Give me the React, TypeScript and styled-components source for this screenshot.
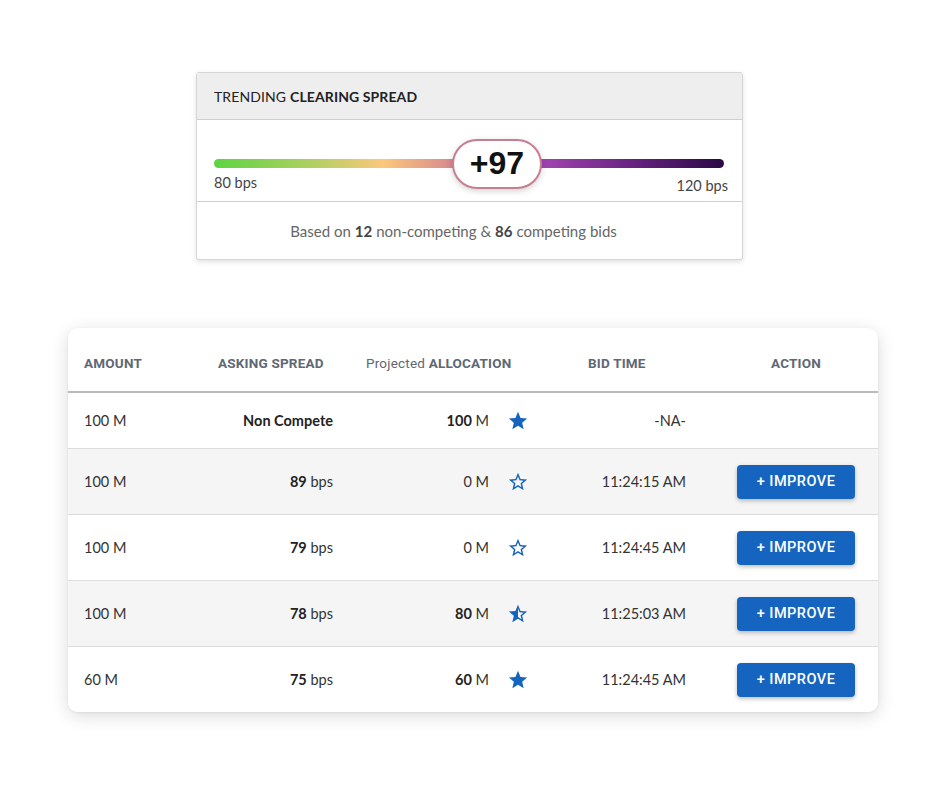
import React from 'react';
import styled, {createGlobalStyle} from 'styled-components';

const GlobalStyle = createGlobalStyle`
  body {
    margin: 0;
    background: #ffffff;
    font-family: Lato, "Open Sans", sans-serif;
    color: #333;
  }
`

type Star = 'full' | 'half' | 'empty'

type BidType = {
    amount: string
    spread?: string
    allocation: string
    allocBold: boolean
    star: Star
    time: string
    improve: boolean
}

const bids: BidType[] = [
    {amount: '100 M', allocation: '100', allocBold: true, star: 'full', time: '-NA-', improve: false},
    {amount: '100 M', spread: '89', allocation: '0', allocBold: false, star: 'empty', time: '11:24:15 AM', improve: true},
    {amount: '100 M', spread: '79', allocation: '0', allocBold: false, star: 'empty', time: '11:24:45 AM', improve: true},
    {amount: '100 M', spread: '78', allocation: '80', allocBold: true, star: 'half', time: '11:25:03 AM', improve: true},
    {amount: '60 M', spread: '75', allocation: '60', allocBold: true, star: 'full', time: '11:24:45 AM', improve: true},
]

const starPaths: Record<Star, string> = {
    full: 'M12 17.27L18.18 21l-1.64-7.03L22 9.24l-7.19-.61L12 2 9.19 8.63 2 9.24l5.46 4.73L5.82 21z',
    empty: 'M22 9.24l-7.19-.62L12 2 9.19 8.63 2 9.24l5.46 4.73L5.82 21 12 17.27 18.18 21l-1.63-7.03L22 9.24zM12 15.4l-3.76 2.27 1-4.28-3.32-2.88 4.38-.38L12 6.1l1.71 4.04 4.38.38-3.32 2.88 1 4.28L12 15.4z',
    half: 'M22 9.24l-7.19-.62L12 2 9.19 8.63 2 9.24l5.46 4.73L5.82 21 12 17.27 18.18 21l-1.63-7.03L22 9.24zM12 15.4V6.1l1.71 4.04 4.38.38-3.32 2.88 1 4.28L12 15.4z',
}

const StarIcon = ({kind}: { kind: Star }) => (
    <svg width="22" height="22" viewBox="0 0 24 24">
        <path d={starPaths[kind]} fill="#1565c0"/>
    </svg>
)

export default function App() {
    return (
        <Page>
            <GlobalStyle/>
            <TrendCard>
                <TrendHeader>TRENDING <b>CLEARING SPREAD</b></TrendHeader>
                <SliderArea>
                    <BarWrap>
                        <Bar/>
                        <Pill>+97</Pill>
                    </BarWrap>
                    <Labels>
                        <span>80 bps</span>
                        <LowLabel>120 bps</LowLabel>
                    </Labels>
                </SliderArea>
                <TrendFooter>
                    Based on <b>12</b> non-competing &amp; <b>86</b> competing bids
                </TrendFooter>
            </TrendCard>

            <TableCard>
                <HeadRow>
                    <HeadCell $pl={16}>AMOUNT</HeadCell>
                    <HeadCell $pl={18}>ASKING SPREAD</HeadCell>
                    <HeadCell $pl={21}><Light>Projected</Light> ALLOCATION</HeadCell>
                    <HeadCell $pl={43}>BID TIME</HeadCell>
                    <HeadCell $pl={14} $center>ACTION</HeadCell>
                </HeadRow>
                {bids.map((b, i) => (
                    <BodyRow key={i} $shaded={i % 2 === 1} $first={i === 0}>
                        <Cell $pl={16}>{b.amount}</Cell>
                        <Cell $right $pr={12}>
                            {b.spread ? <><b>{b.spread}</b>&nbsp;bps</> : <b>Non Compete</b>}
                        </Cell>
                        <Cell $right $pr={16}>
                            <span>{b.allocBold ? <b>{b.allocation}</b> : b.allocation} M</span>
                            <StarBox><StarIcon kind={b.star}/></StarBox>
                        </Cell>
                        <Cell $right $pr={14}>{b.time}</Cell>
                        <Cell $center $pl={14}>
                            {b.improve && <ImproveButton>+ IMPROVE</ImproveButton>}
                        </Cell>
                    </BodyRow>
                ))}
            </TableCard>
        </Page>
    );
}

const Page = styled.div`
  width: 945px;
  height: 785px;
  display: flex;
  flex-direction: column;
  align-items: flex-start;
  padding-top: 72px;
  box-sizing: border-box;
`

const TrendCard = styled.div`
  margin-left: 196px;
  width: 545px;
  border: 1px solid #d6d6d6;
  border-radius: 3px;
  background: #fff;
  box-shadow: 0 2px 5px rgba(0, 0, 0, 0.12);
  overflow: hidden;
`

const TrendHeader = styled.div`
  height: 46px;
  background: #eeeeee;
  border-bottom: 1px solid #cfcfcf;
  display: flex;
  align-items: center;
  padding-left: 17px;
  font-size: 14px;
  color: #222;
  letter-spacing: 0.1px;

  b {
    font-weight: 700;
    margin-left: 4px;
  }
`

const SliderArea = styled.div`
  padding: 39px 16px 7px 17px;
  border-bottom: 1px solid #cfcfcf;
`

const BarWrap = styled.div`
  position: relative;
  width: 510px;
`

const Bar = styled.div`
  height: 9px;
  border-radius: 5px;
  background: linear-gradient(90deg, #5dd443 0%, #a9d05f 18%, #fbc87b 33%, #d8888f 47%, #c06aa0 55%, #a245b0 64%, #6e2687 80%, #2a0845 100%);
`

const Pill = styled.div`
  position: absolute;
  left: 238px;
  top: 50%;
  transform: translateY(-50%);
  width: 86px;
  height: 46px;
  border: 2px solid #c67f8f;
  border-radius: 25px;
  background: #fff;
  box-shadow: 0 2px 6px rgba(0, 0, 0, 0.18);
  display: flex;
  align-items: center;
  justify-content: center;
  font-family: "Liberation Sans", Arial, sans-serif;
  font-weight: 700;
  font-size: 32px;
  color: #111;
`

const Labels = styled.div`
  display: flex;
  justify-content: space-between;
  align-items: flex-start;
  margin-top: 6px;
  font-size: 14.5px;
  color: #444;
  margin-right: -2px;
`

const LowLabel = styled.span`
  margin-top: 3px;
`

const TrendFooter = styled.div`
  height: 57px;
  display: flex;
  align-items: center;
  justify-content: center;
  padding-right: 32px;
  font-size: 15px;
  color: #666;

  b {
    color: #444;
    font-weight: 700;
    margin: 0 4px;
  }
`

const TableCard = styled.div`
  margin-top: 68px;
  margin-left: 68px;
  width: 810px;
  background: #fff;
  border-radius: 10px;
  box-shadow: 0 4px 18px rgba(0, 0, 0, 0.14), 0 1px 3px rgba(0, 0, 0, 0.06);
  overflow: hidden;
`

const columns = '132px 145px 200px 155px 178px'

const HeadRow = styled.div`
  display: grid;
  grid-template-columns: ${columns};
  height: 63px;
  border-bottom: 2px solid #b9b9b9;
  align-items: center;
`

const HeadCell = styled.div<{ $pl?: number; $center?: boolean }>`
  padding-left: ${p => p.$pl ?? 0}px;
  text-align: ${p => p.$center ? 'center' : 'left'};
  font-family: Roboto, sans-serif;
  font-weight: 700;
  font-size: 13.5px;
  color: #5e6874;
  letter-spacing: 0.2px;
  padding-top: 7px;
`

const Light = styled.span`
  font-weight: 400;
`

const BodyRow = styled.div<{ $shaded: boolean; $first: boolean }>`
  display: grid;
  grid-template-columns: ${columns};
  height: ${p => p.$first ? 55 : 65}px;
  align-items: center;
  background: ${p => p.$shaded ? '#f5f5f5' : '#fff'};
  border-bottom: 1px solid #dcdcdc;
  font-size: 14.5px;
  color: #333;

  &:last-child {
    border-bottom: none;
  }

  b {
    font-weight: 700;
    color: #222;
  }
`

const Cell = styled.div<{ $pl?: number; $pr?: number; $right?: boolean; $center?: boolean }>`
  display: flex;
  align-items: center;
  justify-content: ${p => p.$right ? 'flex-end' : p.$center ? 'center' : 'flex-start'};
  padding-left: ${p => p.$pl ?? 0}px;
  padding-right: ${p => p.$pr ?? 0}px;
`

const StarBox = styled.span`
  display: flex;
  margin-left: 18px;
`

const ImproveButton = styled.button`
  width: 118px;
  height: 34px;
  border: none;
  border-radius: 4px;
  background: #1565c0;
  color: #fff;
  font-family: Roboto, sans-serif;
  font-weight: 500;
  font-size: 14.5px;
  letter-spacing: 0.5px;
  box-shadow: 0 2px 4px rgba(0, 0, 0, 0.25);
  cursor: pointer;
`
